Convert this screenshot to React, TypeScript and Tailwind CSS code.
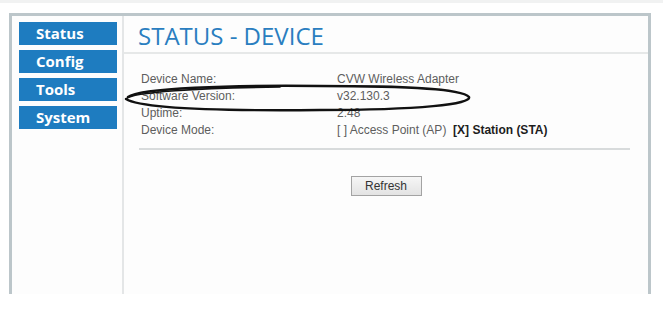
import React from "react";

const navItems = ["Status", "Config", "Tools", "System"];

const rows = [
  { label: "Device Name:", value: "CVW Wireless Adapter" },
  { label: "Software Version:", value: "v32.130.3" },
  { label: "Uptime:", value: "2:48" },
];

export default function App() {
  return (
    <div className="relative w-[663px] h-[311px] bg-white overflow-hidden font-['Liberation_Sans',Arial,sans-serif]">
      <div className="h-[3px] bg-[#f1f2f2]" />
      <div className="ml-[9px] mt-[10px] w-[642px] h-[281px] border-t-[3px] border-x-[3px] border-[#bcc6ca] flex">
        {/* left nav */}
        <div className="w-[110px] pl-[7px] pt-[6px] flex flex-col gap-[5px] bg-[#fdfdfd]">
          {navItems.map((item) => (
            <div
              key={item}
              className="w-[98px] h-[23px] bg-[#1e7cc0] text-white font-['Open_Sans',sans-serif] font-bold text-[15px] leading-[23px] pl-[17px]"
            >
              {item}
            </div>
          ))}
        </div>
        <div className="w-[2px] bg-[#e4e6e7]" />

        {/* content */}
        <div className="flex-1 bg-[#fdfdfd] flex flex-col">
          <div className="h-[38px] border-b-[2px] border-[#e6e8e8] pl-[14px] pt-[5px]">
            <h1 className="font-['Open_Sans',sans-serif] text-[24px] leading-[29px] text-[#2a7ec0]">
              STATUS - DEVICE
            </h1>
          </div>

          <div className="pl-[17px] pt-[17px] text-[12px] leading-[17px] text-[#5e5e5e]">
            {rows.map((r) => (
              <div key={r.label} className="flex">
                <span className="w-[196px]">{r.label}</span>
                <span>{r.value}</span>
              </div>
            ))}
            <div className="flex">
              <span className="w-[196px]">Device Mode:</span>
              <span>
                [ ] Access Point (AP)&nbsp;&nbsp;
                <b className="text-[#1d1d1d]">[X] Station (STA)</b>
              </span>
            </div>
          </div>

          <div className="ml-[15px] mr-[18px] mt-[9px] h-[2px] bg-[#d8dbdc]" />

          <div className="flex justify-center pt-[26px]">
            <button className="w-[71px] h-[20px] border border-[#a3a3a3] bg-gradient-to-b from-[#f6f6f6] to-[#e3e3e3] text-[12px] text-[#333] leading-[18px]">
              Refresh
            </button>
          </div>
        </div>
      </div>

      {/* hand-drawn circle around the software version */}
      <svg
        className="absolute left-0 top-0 pointer-events-none"
        width="663"
        height="311"
        viewBox="0 0 663 311"
      >
        <path
          d="M 128 97 C 140 88, 230 85, 320 86 C 400 86, 462 88, 469 97 C 472 104, 420 110, 320 110 C 220 111, 140 108, 126 99"
          fill="none"
          stroke="#111"
          strokeWidth="2.4"
          strokeLinecap="round"
        />
        <path
          d="M 126 99 C 132 92, 200 88, 280 87"
          fill="none"
          stroke="#111"
          strokeWidth="1.6"
          strokeLinecap="round"
        />
      </svg>
    </div>
  );
}
